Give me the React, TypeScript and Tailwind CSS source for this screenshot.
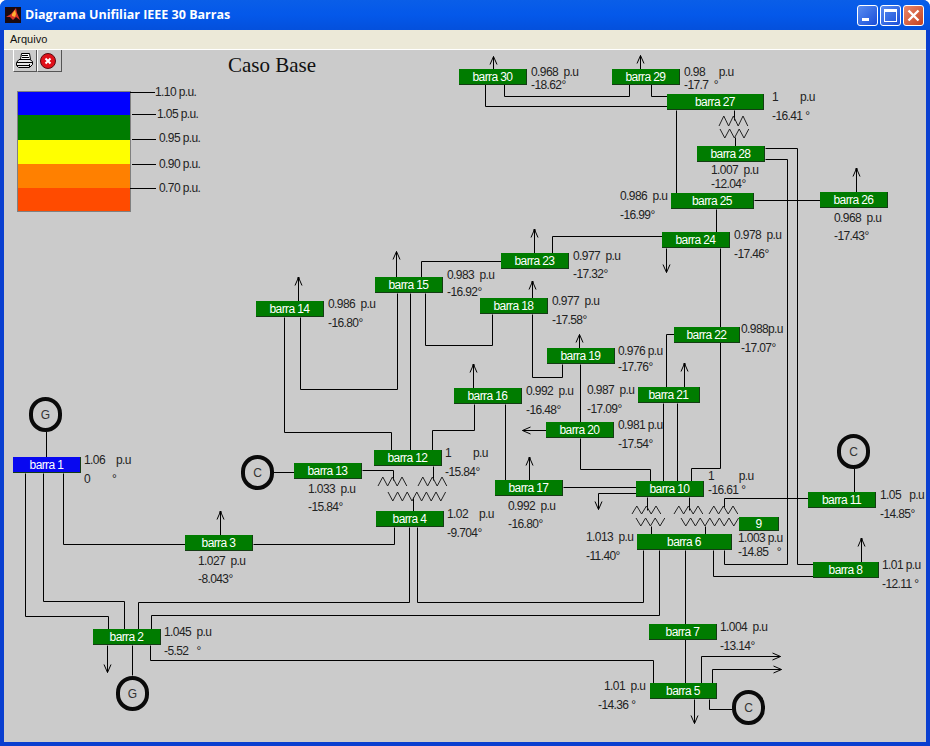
const OX = 4;
const OY = 50;

type TBus = { name: string; x: number; y: number; w?: number; h?: number; blue?: boolean };

const buses: TBus[] = [
  { name: "barra 30", x: 459, y: 69 },
  { name: "barra 29", x: 612, y: 69 },
  { name: "barra 27", x: 667, y: 94, w: 97 },
  { name: "barra 28", x: 697, y: 146 },
  { name: "barra 25", x: 671, y: 193, w: 83 },
  { name: "barra 26", x: 820, y: 192 },
  { name: "barra 24", x: 662, y: 232 },
  { name: "barra 23", x: 501, y: 253 },
  { name: "barra 15", x: 375, y: 277 },
  { name: "barra 14", x: 256, y: 301 },
  { name: "barra 18", x: 480, y: 298 },
  { name: "barra 19", x: 547, y: 348 },
  { name: "barra 22", x: 674, y: 327, w: 66 },
  { name: "barra 21", x: 638, y: 387, w: 62 },
  { name: "barra 16", x: 454, y: 388 },
  { name: "barra 20", x: 546, y: 422 },
  { name: "barra 12", x: 374, y: 450 },
  { name: "barra 13", x: 294, y: 463 },
  { name: "barra 17", x: 495, y: 480 },
  { name: "barra 10", x: 636, y: 481 },
  { name: "barra 11", x: 808, y: 492 },
  { name: "barra 4", x: 376, y: 511 },
  { name: "9", x: 739, y: 517, w: 40, h: 14 },
  { name: "barra 6", x: 637, y: 534, w: 95 },
  { name: "barra 3", x: 185, y: 535 },
  { name: "barra 8", x: 813, y: 562, w: 66 },
  { name: "barra 7", x: 649, y: 624 },
  { name: "barra 2", x: 93, y: 629 },
  { name: "barra 5", x: 650, y: 683, w: 67 },
  { name: "barra 1", x: 13, y: 457, blue: true },
];

// x, y of the p.u line, then x, y of the angle line
const readings: [number, number, string, number, number, string][] = [
  [531, 72, "0.968  p.u", 531, 85, "-18.62°"],
  [684, 72, "0.98     p.u", 684, 85, "-17.7  °"],
  [772, 97, "1        p.u", 772, 116, "-16.41 °"],
  [711, 170, "1.007  p.u", 711, 184, "-12.04°"],
  [620, 196, "0.986  p.u", 620, 215, "-16.99°"],
  [834, 218, "0.968  p.u", 834, 236, "-17.43°"],
  [734, 235, "0.978  p.u", 734, 254, "-17.46°"],
  [573, 256, "0.977  p.u", 573, 274, "-17.32°"],
  [447, 275, "0.983  p.u", 447, 292, "-16.92°"],
  [328, 304, "0.986  p.u", 328, 323, "-16.80°"],
  [552, 301, "0.977  p.u", 552, 320, "-17.58°"],
  [618, 351, "0.976 p.u", 618, 367, "-17.76°"],
  [741, 329, "0.988p.u", 741, 348, "-17.07°"],
  [526, 391, "0.992  p.u", 526, 410, "-16.48°"],
  [587, 390, "0.987  p.u", 587, 409, "-17.09°"],
  [618, 425, "0.981 p.u", 618, 444, "-17.54°"],
  [445, 453, "1        p.u", 445, 472, "-15.84°"],
  [308, 489, "1.033  p.u", 308, 507, "-15.84°"],
  [508, 506, "0.992  p.u", 508, 524, "-16.80°"],
  [447, 514, "1.02    p.u", 447, 533, "-9.704°"],
  [708, 476, "1         p.u", 708, 490, "-16.61 °"],
  [880, 495, "1.05   p.u", 880, 514, "-14.85°"],
  [738, 538, "1.003 p.u", 738, 552, "-14.85   °"],
  [586, 537, "1.013  p.u", 586, 556, "-11.40°"],
  [882, 565, "1.01 p.u", 882, 584, "-12.11 °"],
  [720, 627, "1.004  p.u", 720, 646, "-13.14°"],
  [604, 686, "1.01  p.u", 598, 705, "-14.36 °"],
  [84, 460, "1.06    p.u", 84, 479, "0        °"],
  [198, 561, "1.027  p.u", 198, 579, "-8.043°"],
  [164, 632, "1.045  p.u", 164, 651, "-5.52   °"],
];

const lines: number[][] = [
  [485, 84, 485, 106, 667, 106],
  [504, 84, 504, 96, 629, 96, 629, 84],
  [651, 84, 651, 96, 667, 96],
  [676, 110, 676, 193],
  [734, 110, 734, 120],
  [735, 137, 735, 146],
  [765, 148, 797, 148, 797, 564, 813, 564],
  [765, 159, 787, 159, 787, 564, 724, 564, 724, 550],
  [754, 200, 820, 200],
  [716, 209, 716, 232],
  [662, 236, 552, 236, 552, 253],
  [720, 248, 720, 468, 691, 468, 691, 481],
  [501, 261, 421, 261, 421, 277],
  [300, 317, 300, 389, 397, 389, 397, 293],
  [284, 317, 284, 432, 391, 432, 391, 450],
  [410, 293, 410, 450],
  [425, 293, 425, 345, 492, 345, 492, 314],
  [532, 314, 532, 377, 562, 377, 562, 364],
  [580, 364, 580, 422],
  [474, 404, 474, 430, 432, 430, 432, 450],
  [505, 404, 505, 480],
  [580, 438, 580, 469, 650, 469, 650, 481],
  [563, 487, 636, 487],
  [273, 472, 294, 472],
  [362, 470, 393, 470, 393, 480],
  [433, 466, 433, 480],
  [413, 511, 413, 497],
  [394, 527, 394, 544, 253, 544],
  [409, 527, 409, 602, 138, 602, 138, 629],
  [417, 527, 417, 602, 643, 602, 643, 550],
  [659, 550, 659, 615, 151, 615, 151, 629],
  [685, 550, 685, 683],
  [25, 473, 25, 616, 108, 616, 108, 629],
  [43, 473, 43, 601, 124, 601, 124, 629],
  [63, 473, 63, 544, 185, 544],
  [46, 457, 46, 431],
  [132, 645, 132, 675],
  [150, 645, 150, 660, 653, 660, 653, 683],
  [709, 699, 709, 709, 732, 709],
  [854, 492, 854, 468],
  [808, 498, 724, 498, 724, 507],
  [647, 497, 647, 510],
  [689, 497, 689, 510],
  [651, 526, 651, 534],
  [705, 526, 705, 534],
  [663, 403, 663, 481],
  [677, 403, 677, 481],
  [666, 387, 666, 334, 674, 334],
  [713, 550, 713, 576, 813, 576],
];

// each arrow: line points, last point is the tip
const arrows: number[][] = [
  [493, 69, 493, 56],
  [640, 69, 640, 55],
  [856, 192, 856, 168],
  [666, 248, 666, 272],
  [534, 253, 534, 229],
  [396, 277, 396, 251],
  [298, 301, 298, 277],
  [532, 298, 532, 281],
  [579, 348, 579, 334],
  [473, 388, 473, 364],
  [546, 430, 522, 430],
  [529, 480, 529, 457],
  [636, 493, 598, 493, 598, 509],
  [684, 387, 684, 363],
  [861, 562, 861, 538],
  [220, 535, 220, 511],
  [107, 645, 107, 672],
  [701, 683, 701, 656, 780, 656],
  [712, 683, 712, 669, 781, 669],
  [694, 699, 694, 723],
];

// small blobs left at some arrow tips
const tips = [
  [856, 168],
  [534, 229],
  [298, 277],
  [532, 281],
  [473, 364],
  [529, 457],
  [684, 363],
  [861, 538],
  [220, 511],
];

// x, y of the left end, peaks, height, direction
const coils: [number, number, number, number, boolean][] = [
  [719, 116, 3, 10, true],
  [720, 129, 3, 9, false],
  [378, 477, 3, 9, true],
  [418, 477, 3, 9, true],
  [388, 492, 6, 9, false],
  [632, 506, 3, 8, true],
  [674, 506, 3, 8, true],
  [709, 506, 3, 8, true],
  [636, 518, 3, 8, false],
  [681, 518, 6, 8, false],
];

const sources = [
  { label: "G", x: 45, y: 414 },
  { label: "G", x: 132, y: 693 },
  { label: "C", x: 257, y: 472 },
  { label: "C", x: 853, y: 451 },
  { label: "C", x: 748, y: 707 },
];

const legend = [
  "h-[23px] bg-[#0000ff]",
  "h-[25px] bg-[#007c00]",
  "h-[24px] bg-[#ffff00]",
  "h-[24px] bg-[#ff8000]",
  "h-[23px] bg-[#ff4b00]",
];

// y of the tick, its two ends, then the label position
const legendTicks: [number, number, number, number, number, string][] = [
  [92, 130, 155, 155, 92, "1.10 p.u."],
  [114, 132, 156, 157, 114, "1.05 p.u."],
  [139, 132, 156, 159, 138, "0.95 p.u."],
  [164, 132, 156, 159, 164, "0.90 p.u."],
  [188, 130, 156, 159, 188, "0.70 p.u."],
];

const toPoints = (p: number[]) => {
  const out: string[] = [];
  for (let i = 0; i < p.length; i += 2) out.push(`${p[i] + 0.5},${p[i + 1] + 0.5}`);
  return out.join(" ");
};

const arrowHead = (p: number[]) => {
  const n = p.length;
  const tx = p[n - 2] + 0.5;
  const ty = p[n - 1] + 0.5;
  const dx = Math.sign(p[n - 2] - p[n - 4]);
  const dy = Math.sign(p[n - 1] - p[n - 3]);
  const ax = tx - dx * 8 - dy * 3.5;
  const ay = ty - dy * 8 - dx * 3.5;
  const bx = tx - dx * 8 + dy * 3.5;
  const by = ty - dy * 8 + dx * 3.5;
  return `${ax},${ay} ${tx},${ty} ${bx},${by}`;
};

const coilPoints = ([x, y, peaks, h, up]: [number, number, number, number, boolean]) => {
  const step = 4.8;
  const out: string[] = [];
  for (let i = 0; i <= peaks * 2; i++) {
    const high = i % 2 === 1 ? up : !up;
    out.push(`${x + i * step},${high ? y : y + h}`);
  }
  return out.join(" ");
};

const Printer = () => (
  <svg width="17" height="16" viewBox="0 0 17 16">
    <path d="M5.5 .5h8l1 6h-10z" fill="#fff" stroke="#000" />
    <path d="M6 2.5h6M6 4.5h7" stroke="#000" />
    <path d="M3 6.5h11l2.5 2v3l-3 3h-11l-2-2v-3z" fill="#e8e8e8" stroke="#000" />
    <path d="M1 9.5h15M1 12.5h12" stroke="#000" />
    <path d="M13.5 11v3" stroke="#000" />
  </svg>
);

const StopIcon = () => (
  <svg width="16" height="16" viewBox="0 0 16 16">
    <circle cx="8" cy="8" r="7.5" fill="#e0101a" stroke="#5a0a10" />
    <path d="M5.5 5.5l5 5M10.5 5.5l-5 5" stroke="#fff" strokeWidth="2" />
  </svg>
);

const AppLogo = () => (
  <svg width="16" height="16" viewBox="0 0 16 16">
    <rect width="16" height="16" fill="#1a0a10" />
    <path d="M1 10l5-3 5-6 1 5 3 7-4-3-3 3-3-3z" fill="#d8342a" />
    <path d="M7 7l3-4 1 4-1 3-3-1z" fill="#ffb030" />
  </svg>
);

const WinButton = ({ children, red }: { children: React.ReactNode; red?: boolean }) => (
  <div
    className={`flex h-[21px] w-[21px] items-center justify-center rounded-[3px] border border-white ${
      red
        ? "bg-gradient-to-br from-[#e8876a] to-[#c6401c]"
        : "bg-gradient-to-br from-[#5a8cf0] to-[#1a4cd8]"
    }`}
  >
    {children}
  </div>
);

const App = () => {
  return (
    <div className="flex h-[746px] w-[930px] flex-col overflow-hidden rounded-t-[7px] bg-[#0a3fd0] font-['Liberation_Sans',Arial,sans-serif]">
      <div className="flex h-[30px] shrink-0 items-center bg-gradient-to-b from-[#0a5ee8] via-[#0458ea] to-[#0450dc] pl-[5px] pr-[6px]">
        <AppLogo />
        <span className="ml-[4px] font-['Open_Sans',sans-serif] text-[12.5px] font-bold text-white">
          Diagrama Unifiliar IEEE 30 Barras
        </span>
        <div className="ml-auto flex gap-[2px]">
          <WinButton>
            <div className="mt-[9px] mr-[4px] h-[3px] w-[7px] bg-white" />
          </WinButton>
          <WinButton>
            <div className="h-[13px] w-[13px] border border-white border-t-[3px]" />
          </WinButton>
          <WinButton red>
            <svg width="13" height="13" viewBox="0 0 13 13">
              <path d="M1.5 1.5l10 10M11.5 1.5l-10 10" stroke="#fff" strokeWidth="2.4" />
            </svg>
          </WinButton>
        </div>
      </div>

      <div className="mx-[4px] flex h-[20px] shrink-0 items-center border-b border-white bg-[#ece9d8] pl-[6px] text-[11px] text-[#111]">
        Arquivo
      </div>

      <div className="relative mx-[4px] mb-[4px] flex-1 overflow-hidden bg-[#cbcbcb]">
        <div className="absolute left-[9px] top-0 flex">
          <div className="flex h-[22px] w-[24px] items-center justify-center border border-t-0 border-b-[#555] border-l-white border-r-[#555] pr-[2px]">
            <Printer />
          </div>
          <div className="flex h-[22px] w-[25px] items-center justify-center border border-t-0 border-b-[#555] border-l-white border-r-[#555] pr-[3px]">
            <StopIcon />
          </div>
        </div>

        <div className="absolute left-[224px] top-[2px] font-['Liberation_Serif',serif] text-[21px] leading-[26px] text-[#111]">
          Caso Base
        </div>

        <div className="absolute left-[13px] top-[41px] flex w-[114px] flex-col border border-[#808080]">
          {legend.map((b) => (
            <div key={b} className={b} />
          ))}
        </div>

        <svg
          className="absolute inset-0"
          width="922"
          height="692"
          viewBox={`${OX} ${OY} 922 692`}
          fill="none"
          stroke="#000"
          strokeWidth="1"
        >
          {legendTicks.map(([y, x1, x2]) => (
            <line key={y} x1={x1} x2={x2} y1={y + 0.5} y2={y + 0.5} />
          ))}
          {lines.map((p, i) => (
            <polyline key={i} points={toPoints(p)} />
          ))}
          {arrows.map((p, i) => (
            <g key={i}>
              <polyline points={toPoints(p)} />
              <polyline points={arrowHead(p)} />
            </g>
          ))}
          {tips.map(([x, y]) => (
            <rect key={x} x={x - 0.5} y={y} width="2" height="2" fill="#000" stroke="none" />
          ))}
          {coils.map((c, i) => (
            <polyline key={i} points={coilPoints(c)} stroke="#222" />
          ))}
        </svg>

        {legendTicks.map(([, , , tx, ty, text]) => (
          <div
            key={text}
            className="absolute whitespace-pre text-[12px] leading-[14px] tracking-[-0.6px] text-[#222]"
            style={{ left: tx - OX, top: ty - 7 - OY }}
          >
            {text}
          </div>
        ))}

        {buses.map((b) => (
          <div
            key={b.name}
            className={`absolute flex items-center justify-center border-b border-r border-b-[#143c14] border-r-[#143c14] text-[12px] tracking-[-0.6px] text-white ${
              b.blue ? "bg-[#0808f0]" : "bg-[#007c00]"
            }`}
            style={{ left: b.x - OX, top: b.y - OY, width: b.w ?? 68, height: b.h ?? 16 }}
          >
            {b.name}
          </div>
        ))}

        {readings.map(([x1, y1, pu, x2, y2, deg]) => (
          <div key={`${x1}-${y1}`}>
            <div
              className="absolute whitespace-pre text-[12px] leading-[14px] tracking-[-0.6px] text-[#222]"
              style={{ left: x1 - OX, top: y1 - 7 - OY }}
            >
              {pu}
            </div>
            <div
              className="absolute whitespace-pre text-[12px] leading-[14px] tracking-[-0.6px] text-[#222]"
              style={{ left: x2 - OX, top: y2 - 7 - OY }}
            >
              {deg}
            </div>
          </div>
        ))}

        {sources.map((s) => (
          <div
            key={`${s.x}-${s.y}`}
            className="absolute flex h-[35px] w-[33px] items-center justify-center rounded-full border-[4px] border-[#0a0a0a] text-[12px] text-[#333]"
            style={{ left: s.x - 16 - OX, top: s.y - 17 - OY }}
          >
            {s.label}
          </div>
        ))}
      </div>
    </div>
  );
};

export default App;
